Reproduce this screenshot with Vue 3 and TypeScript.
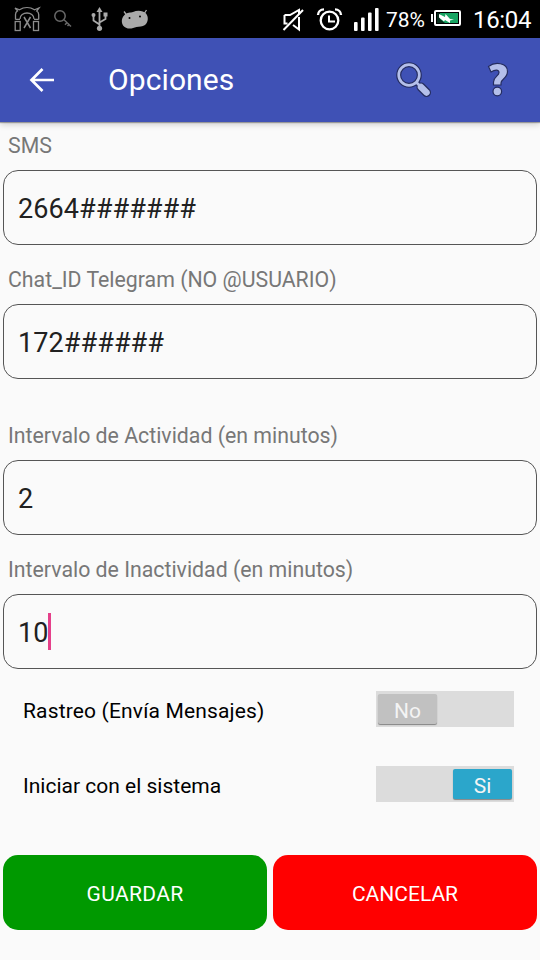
<script setup lang="ts">
import { ref } from 'vue'

interface Field {
  id: string
  label: string
  value: string
  groupStart?: boolean
  focused?: boolean
}

interface Toggle {
  id: string
  label: string
  on: boolean
}

const fields = ref<Field[]>([
  { id: 'sms', label: 'SMS', value: '2664#######' },
  { id: 'chat', label: 'Chat_ID Telegram (NO @USUARIO)', value: '172######' },
  { id: 'active', label: 'Intervalo de Actividad (en minutos)', value: '2', groupStart: true },
  { id: 'idle', label: 'Intervalo de Inactividad (en minutos)', value: '10', focused: true },
])

const toggles = ref<Toggle[]>([
  { id: 'track', label: 'Rastreo (Envía Mensajes)', on: false },
  { id: 'boot', label: 'Iniciar con el sistema', on: true },
])
</script>

<template>
  <div class="screen">
    <div class="status">
      <svg class="notifications" width="160" height="38" viewBox="0 0 160 38" fill="none">
        <g stroke="#8c8c8c" stroke-width="1.3">
          <path d="M15.500 19.500v-5c0-2 .8-3 2-3.600L15 8l4.500 1.800c4.500-3 10.500-3 15 0L39 8l-2.300 3c1.200.700 2 2 2 3.500v5M15.500 19.300h4.500M34 19.300h4.700" />
          <path d="M20 19c0-8 14-8 14 0" />
          <rect x="15.200" y="21.500" width="5" height="9" />
          <rect x="33.500" y="21.500" width="5" height="9" />
          <path d="M24 17l6.500 11M30.500 17L24 28" stroke-width="1.500" />
        </g>
        <g stroke="#696969" stroke-width="1.500">
          <circle cx="60" cy="16" r="5.200" />
          <path d="M64 19.800l7 6.700M67 22.700l-2 2M69.500 24l-2 2" />
        </g>
        <g stroke="#aaa" stroke-width="1.800">
          <path d="M99.500 27V10M99.500 24.500L93.500 20.500V15M99.500 22.500l6-3.500V15" />
          <path d="M99.500 7l-3 5h6z" fill="#aaa" stroke="none" />
          <circle cx="99.500" cy="28.300" r="2.600" fill="#aaa" stroke="none" />
          <circle cx="93.500" cy="15" r="2" fill="#aaa" stroke="none" />
          <path d="M103.500 12.500h4v4h-4z" fill="#aaa" stroke="none" />
        </g>
        <path d="M124 11.500l3 4M146.500 10l-2.500 4" stroke="#aaa" stroke-width="1.300" />
        <path d="M124.500 15c2.500-3 6-2 8.500-3 4.500-2 10-1.500 13 1.500 3 3.500 2 9-1 11.500-2.500 2-6 1.200-8.500 2-3.500 1.200-7 2.400-10.500.700-5-2-5.500-9-1.500-12.700z" fill="#aaa" />
        <circle cx="129.500" cy="18" r="1" fill="#000" />
        <circle cx="140" cy="16.500" r="1" fill="#000" />
      </svg>
      <div class="system">
        <svg class="signals" width="102" height="38" viewBox="0 0 102 38" fill="none" stroke="#fff">
          <path d="M4.500 15h5.500l9-5v4M4.500 15v8.500h3M13 25l6 4.500V17" stroke-width="2" />
          <path d="M3.500 30L23 10" stroke-width="2" />
          <circle cx="49.500" cy="20.500" r="8.800" stroke-width="2.300" />
          <path d="M49 15.500v6h6" stroke-width="2" />
          <path d="M38 15c0-3 2.500-5.500 6-5.600M61 15c0-3-2.500-5.500-6-5.600" stroke-width="2.400" />
          <g fill="#fff" stroke="none">
            <rect x="74" y="22" width="3.600" height="9" rx="1" />
            <rect x="81" y="17.500" width="3.600" height="13.500" rx="1" />
            <rect x="88" y="12.500" width="3.600" height="18.500" rx="1" />
            <rect x="95" y="8" width="3.600" height="23" rx="1" />
          </g>
        </svg>
        <span class="percent">78%</span>
        <svg class="battery" width="31" height="38" viewBox="0 0 31 38">
          <rect x="1" y="14" width="2" height="8" fill="#fff" />
          <rect x="5" y="11" width="25" height="14" rx="1" fill="none" stroke="#fff" stroke-width="2" />
          <rect x="8" y="13" width="20" height="10" fill="#18a462" />
          <path d="M7 13h3v6l5 4H7z" fill="#082c1b" />
          <path d="M9 14l6 3 .500-3 4.500 5 4 .500-4 1v2.500l-5-3-1 1.500-5-4z" fill="#fff" />
        </svg>
        <span class="clock">16:04</span>
      </div>
    </div>

    <header class="appbar">
      <button class="icon-button back" aria-label="Atrás">
        <svg width="26" height="26" viewBox="0 0 26 26" fill="none" stroke="#fff" stroke-width="2.700">
          <path d="M25 13H3M13.500 2L2.500 13l11 11" />
        </svg>
      </button>
      <h1>Opciones</h1>
      <button class="icon-button search" aria-label="Buscar">
        <svg width="36" height="36" viewBox="0 0 36 36" fill="none">
          <circle cx="13" cy="13" r="10.300" stroke="#252d60" stroke-width="5" />
          <path d="M20.500 20.500l4 4" stroke="#252d60" stroke-width="5" />
          <path d="M25 25l5.500 5.500" stroke="#252d60" stroke-width="9" stroke-linecap="round" />
          <circle cx="13" cy="13" r="10.300" stroke="#b4bfea" stroke-width="2.700" />
          <path d="M20 20l4.500 4.500" stroke="#b4bfea" stroke-width="2.700" />
          <path d="M25 25l5.500 5.500" stroke="#b4bfea" stroke-width="6.500" stroke-linecap="round" />
        </svg>
      </button>
      <button class="icon-button help" aria-label="Ayuda">
        <svg width="22" height="36" viewBox="0 0 22 36" fill="#b4bfea" stroke="#252d60" stroke-width="1.200">
          <path d="M1.500 4.500C8-.5 20.500.5 20.500 9.500c0 7-6.500 7.500-6.500 11.500v2H6.500v-3c0-5.500 5.500-6 5.500-9.500 0-3.500-4.500-2.500-8-.500z" />
          <circle cx="10.300" cy="29.500" r="4.300" />
        </svg>
      </button>
    </header>

    <main>
      <div v-for="field in fields" :key="field.id" class="field" :class="{ 'group-start': field.groupStart }">
        <div class="label">{{ field.label }}</div>
        <div class="input">
          <span>{{ field.value }}</span>
          <i v-if="field.focused" class="caret" />
        </div>
      </div>

      <div class="toggles">
        <div v-for="item in toggles" :key="item.id" class="toggle-row">
          <span class="toggle-label" :class="item.id">{{ item.label }}</span>
          <button class="switch" :class="{ on: item.on }" @click="item.on = !item.on">
            <span class="thumb">{{ item.on ? 'Si' : 'No' }}</span>
          </button>
        </div>
      </div>

      <div class="actions">
        <button class="action save">GUARDAR</button>
        <button class="action cancel">CANCELAR</button>
      </div>
    </main>
  </div>
</template>

<style>
body {
  background: #fafafa;
}
</style>

<style scoped>
.screen {
  width: 540px;
  height: 960px;
  overflow: hidden;
  background: #fafafa;
  font-family: Roboto, "Liberation Sans", sans-serif;
}
button {
  border: 0;
  padding: 0;
  background: none;
  font: inherit;
}
svg {
  display: block;
  flex: none;
}
.status {
  display: flex;
  justify-content: space-between;
  height: 38px;
  background: #000;
  color: #fff;
}
.system {
  display: flex;
  width: 260px;
  line-height: 40px;
}
.signals {
  margin-right: 4px;
}
.percent {
  width: 44px;
  font-size: 21px;
}
.battery {
  margin-right: 12px;
}
.clock {
  font-size: 24px;
  letter-spacing: -0.35px;
  white-space: nowrap;
}
.appbar {
  display: flex;
  align-items: center;
  height: 84px;
  padding: 0 31px 0 29px;
  box-sizing: border-box;
  background: #3f51b5;
  box-shadow: 0 1px 1px rgba(0, 0, 0, 0.3), 0 3px 6px rgba(0, 0, 0, 0.16);
}
.back {
  margin-right: 53px;
}
h1 {
  flex: 1;
  margin: 0;
  color: #fff;
  font-size: 30px;
  font-weight: 400;
  letter-spacing: 0.1px;
  line-height: 86px;
}
.search {
  margin-right: 55px;
}
main {
  padding: 0 3px;
}
.field {
  margin-bottom: 11px;
}
.field.group-start {
  margin-top: 33px;
}
.label {
  height: 48px;
  padding-left: 5px;
  line-height: 48px;
  font-size: 21.3px;
  color: #777;
}
.input {
  display: flex;
  align-items: center;
  height: 75px;
  padding: 2px 14px 0;
  box-sizing: border-box;
  border: 1px solid #555;
  border-radius: 15px;
  color: #212121;
  font-size: 27px;
  letter-spacing: 0.08px;
}
.caret {
  width: 3px;
  height: 37px;
  margin: -2px 0 0 -1px;
  background: #e5408a;
}
.toggles {
  display: grid;
  gap: 39px;
  padding: 11px 23px 0 20px;
}
.toggle-row {
  display: flex;
  align-items: center;
  justify-content: space-between;
  height: 36px;
}
.toggle-label {
  padding-top: 4px;
  font-size: 21px;
  color: #000;
}
.toggle-label.track {
  letter-spacing: 0.16px;
}
.switch {
  display: flex;
  width: 138px;
  height: 36px;
  padding: 3px 2px;
  box-sizing: border-box;
  background: #dcdcdc;
}
.switch.on {
  justify-content: flex-end;
}
.thumb {
  width: 59px;
  height: 30px;
  border-radius: 2px;
  background: #c1c1c1;
  box-shadow: 0 1px 1px rgba(0, 0, 0, 0.4);
  color: #f4f4f4;
  font-size: 21px;
  line-height: 34px;
  text-align: center;
}
.on .thumb {
  background: #2ba6cb;
}
.actions {
  display: grid;
  grid-template-columns: 1fr 1fr;
  gap: 6px;
  margin-top: 53px;
}
.action {
  height: 75px;
  padding-top: 2px;
  border-radius: 15px;
  color: #fff;
  font-size: 21px;
}
.save {
  background: #090;
  letter-spacing: 0.35px;
}
.cancel {
  background: #f00;
}
</style>
